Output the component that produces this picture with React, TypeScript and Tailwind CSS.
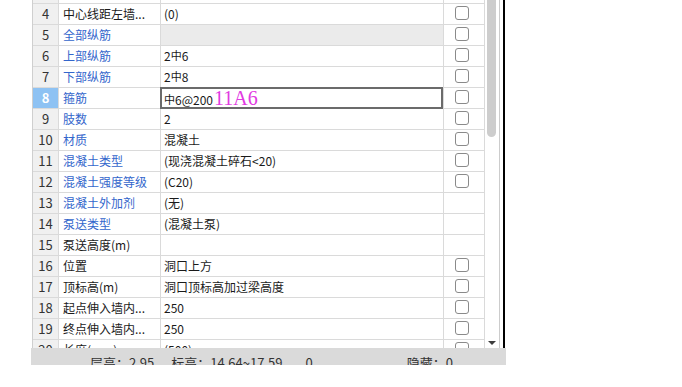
import React from "react";

type Row = {
  no: number;
  name: string;
  value: React.ReactNode;
  blue?: boolean;
  check?: boolean;
  shaded?: boolean;
  selected?: boolean;
};

const Bar = ({ d }: { d: string }) => (
  <>
    <span className="text-[11px] relative -top-[1px]">中</span>
    {d}
  </>
);

const rows: Row[] = [
  { no: 3, name: "", value: "", check: false },
  { no: 4, name: "中心线距左墙...", value: "(0)", check: true },
  { no: 5, name: "全部纵筋", value: "", blue: true, check: true, shaded: true },
  { no: 6, name: "上部纵筋", value: <>2<Bar d="6" /></>, blue: true, check: true },
  { no: 7, name: "下部纵筋", value: <>2<Bar d="8" /></>, blue: true, check: true },
  {
    no: 8,
    name: "箍筋",
    value: (
      <>
        <Bar d="6@200" />
        <span className="ml-[1px] text-[20px] leading-none text-[#e23ae2] [font-family:'Liberation_Serif',serif]">
          11A6
        </span>
      </>
    ),
    blue: true,
    check: true,
    selected: true,
  },
  { no: 9, name: "肢数", value: "2", blue: true, check: true },
  { no: 10, name: "材质", value: "混凝土", blue: true, check: true },
  { no: 11, name: "混凝土类型", value: "(现浇混凝土碎石<20)", blue: true, check: true },
  { no: 12, name: "混凝土强度等级", value: "(C20)", blue: true, check: true },
  { no: 13, name: "混凝土外加剂", value: "(无)", blue: true },
  { no: 14, name: "泵送类型", value: "(混凝土泵)", blue: true },
  { no: 15, name: "泵送高度(m)", value: "" },
  { no: 16, name: "位置", value: "洞口上方", check: true },
  { no: 17, name: "顶标高(m)", value: "洞口顶标高加过梁高度", check: true },
  { no: 18, name: "起点伸入墙内...", value: "250", check: true },
  { no: 19, name: "终点伸入墙内...", value: "250", check: true },
  { no: 20, name: "长度(mm)", value: "(500)", check: true },
];

function GridRow({ r }: { r: Row }) {
  return (
    <div className="flex h-[21px] border-b border-[#dadada]">
      <div
        className={
          r.selected
            ? "flex w-[26px] items-center justify-center border-r border-[#dadada] bg-[#8ec2f3] text-[13px] font-bold text-white"
            : "flex w-[26px] items-center justify-center border-r border-[#dadada] bg-[#f0f0f0] text-[13px] text-[#333]"
        }
      >
        {r.no}
      </div>
      <div
        className={
          r.blue
            ? "flex w-[102px] items-center border-r border-[#dadada] pl-[4px] text-[#3366cc]"
            : "flex w-[102px] items-center border-r border-[#dadada] pl-[4px] text-[#1a1a1a]"
        }
      >
        {r.name}
      </div>
      <div
        className={
          r.shaded
            ? "relative flex w-[283px] items-center border-r border-[#dadada] bg-[#ebebeb] pl-[3px]"
            : "relative flex w-[283px] items-center border-r border-[#dadada] pl-[3px]"
        }
      >
        {r.selected && (
          <div className="absolute -left-[1px] -top-[1px] bottom-[-1px] right-0 border-2 border-[#6b6b6b]" />
        )}
        <span className="relative flex items-baseline whitespace-nowrap">{r.value}</span>
      </div>
      <div className="w-[41px] border-r border-[#dadada] pl-[11px] pt-[2px]">
        {r.check && (
          <div className="h-[14px] w-[14px] rounded-[3px] border border-[#8a8a8a] bg-white" />
        )}
      </div>
    </div>
  );
}

export default function App() {
  return (
    <div className="h-[387px] w-[682px] overflow-hidden bg-white text-[12px] text-[#1a1a1a] [font-family:'Noto_Sans_CJK_SC','Noto_Sans',sans-serif]">
      <div className="ml-[31px] w-[475px]">
        <div className="flex h-[348px]">
          <div className="ml-[1px] h-[348px] overflow-hidden border-l border-[#cfcfcf]">
            <div className="-mt-[17px]">
              {rows.map((r) => (
                <GridRow key={r.no} r={r} />
              ))}
            </div>
          </div>
          <div className="flex w-[15px] flex-col justify-between border-r border-[#cccccc]">
            <div className="ml-[2px] h-[137px] w-[9px] rounded-b-[5px] bg-[#cdcdcd]" />
            <div className="mb-[3px] ml-[3px] h-0 w-0 border-x-[4px] border-t-[4px] border-x-transparent border-t-[#3c3c3c]" />
          </div>
          <div className="ml-[3px] w-[2px] bg-black" />
        </div>
        <div className="flex h-[17px] overflow-hidden bg-[#dadada] pt-[6px] text-[13px] leading-[17px] text-[#333] whitespace-nowrap">
          <span className="ml-[59px]">层高：2.95</span>
          <span className="ml-[17px]">标高：14.64~17.59</span>
          <span className="ml-[23px]">0</span>
          <span className="ml-[94px]">隐藏：0</span>
        </div>
      </div>
    </div>
  );
}
